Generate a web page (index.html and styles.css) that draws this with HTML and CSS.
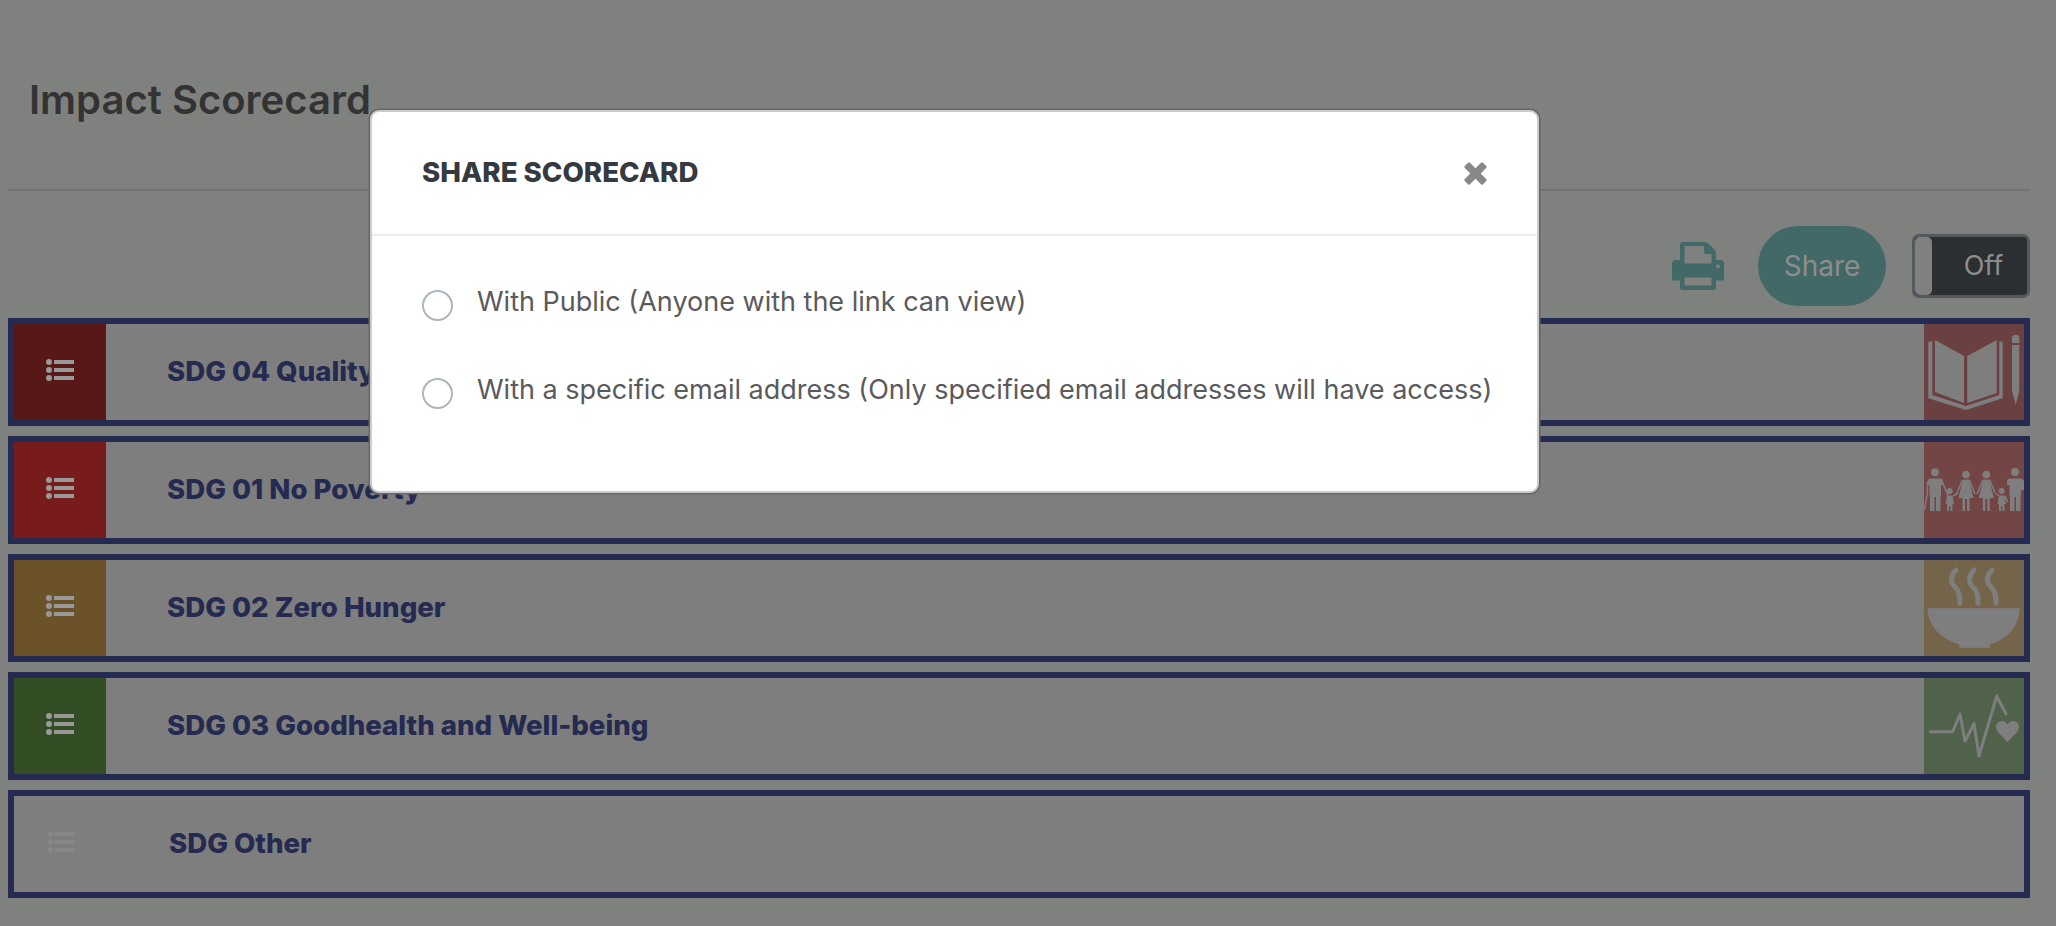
FILE: index.html
```html
<!DOCTYPE html>
<html lang="en">
<head>
  <meta charset="UTF-8">
  <meta name="viewport" content="width=device-width, initial-scale=1.0">
  <title>Impact Scorecard</title>
  <link rel="stylesheet" href="styles.css">
</head>
<body>

<div class="page">
  <h1 class="page-title">Impact Scorecard</h1>

  <!-- Acciones -->
  <div class="toolbar">
    <svg class="print-icon" viewBox="0 0 52 48">
      <path fill-rule="evenodd" d="M8 2.500Q8 0 10.500 0H33Q35 0 36.500 1.500L42.500 7.500Q44 9 44 11V18H48Q52 18 52 22V37Q52 38.500 50.500 38.500H44V45.500Q44 48 41.500 48H10.500Q8 48 8 45.500V38.500H1.500Q0 38.500 0 37V22Q0 18 4 18H8ZM12.500 4V21.500H39.500V12H34Q32 12 32 10V4ZM12.500 35.500V43.500H39.500V35.500ZM46 22.500A2 2 0 1 0 46 26.500A2 2 0 1 0 46 22.500Z"/>
    </svg>
    <button class="btn-share">Share</button>
    <div class="toggle">
      <span class="toggle-handle"></span>
      <span class="toggle-label">Off</span>
    </div>
  </div>

  <!-- Lista de SDG -->
  <div class="sdg-list">
    <div class="sdg-row">
      <div class="sdg-tile tile-dark-red">
        <svg class="list-icon" viewBox="0 0 28 22"><use href="#list-ul"/></svg>
      </div>
      <div class="sdg-name">SDG 04 Quality Education</div>
      <div class="sdg-goal goal-education">
        <svg viewBox="0 0 100 96">
          <path d="M11 16L40 32V79L11 68ZM43.300 32L72.700 16V69L43.300 79Z"/>
          <path d="M4.300 18L8.300 17V71L42 82L75.300 71V17L78.700 18V74.300L42 86L4.300 74.300Z"/>
          <path d="M88 19V14.500A3.650 3.650 0 0 1 95.300 14.500V19ZM88 21H95.300V67L91.700 81L88 67Z"/>
        </svg>
      </div>
    </div>

    <div class="sdg-row">
      <div class="sdg-tile tile-red">
        <svg class="list-icon" viewBox="0 0 28 22"><use href="#list-ul"/></svg>
      </div>
      <div class="sdg-name">SDG 01 No Poverty</div>
      <div class="sdg-goal goal-poverty">
        <svg viewBox="0 0 100 96">
          <g class="figures">
            <circle cx="11" cy="30.300" r="4"/>
            <path d="M6 36.500H16Q19 36.500 19 39.500V43H17V54H16.500V69H12V55H10.500V69H6V54H5.500V43H4V39.500Q4 36.500 6 36.500Z"/>
            <path class="arm" d="M18 39L24 54M3.500 39V50L0.500 68"/>
            <circle cx="25.700" cy="49" r="3"/>
            <path d="M23 53.500H28.500L30 62H28.500V69H26.300V64H25.200V69H23V62H21.500Z"/>
            <path class="arm" d="M29 54L34 51"/>
            <circle cx="42" cy="32.500" r="3.800"/>
            <path d="M39 37.500H45L49.500 56H45.500V69H43V57H41V69H38.500V56H34.500Z"/>
            <path class="arm" d="M38.500 38L33 51M45.500 38L51 52"/>
            <circle cx="62.300" cy="32.500" r="3.800"/>
            <path d="M59.300 37.500H65.300L69.800 56H65.800V69H63.300V57H61.300V69H58.800V56H54.800Z"/>
            <path class="arm" d="M58.800 38L53 52M65.800 38L71 51"/>
            <circle cx="77.700" cy="49" r="3"/>
            <path d="M75 53.500H80.500L82 62H80.500V69H78.300V64H77.200V69H75V62H73.500Z"/>
            <path class="arm" d="M75 54L71 51M80.500 54L84 60"/>
            <circle cx="91" cy="30" r="4"/>
            <path d="M86 36.500H96Q99 36.500 100 39.500V48H97V54H96.500V69H92V55H90.500V69H86V54H85.500V43H83V39.500Q83 36.500 86 36.500Z"/>
          </g>
        </svg>
      </div>
    </div>

    <div class="sdg-row">
      <div class="sdg-tile tile-amber">
        <svg class="list-icon" viewBox="0 0 28 22"><use href="#list-ul"/></svg>
      </div>
      <div class="sdg-name">SDG 02 Zero Hunger</div>
      <div class="sdg-goal goal-hunger">
        <svg viewBox="0 0 100 96">
          <path d="M3.300 48.300H96Q94 76 66 84.500V87.700H35.300V84.500Q6 76 3.300 48.300Z"/>
          <path class="steam" d="M32 10C26 16 26 22 31 27C35 31 36 35 36 43.300"/>
          <path class="steam" d="M50 10C44 16 44 22 49 27C53 31 54 35 54 43.300"/>
          <path class="steam" d="M68 10C62 16 62 22 67 27C71 31 72 35 72 43.300"/>
        </svg>
      </div>
    </div>

    <div class="sdg-row">
      <div class="sdg-tile tile-green">
        <svg class="list-icon" viewBox="0 0 28 22"><use href="#list-ul"/></svg>
      </div>
      <div class="sdg-name">SDG 03 Goodhealth and Well-being</div>
      <div class="sdg-goal goal-health">
        <svg viewBox="0 0 100 96">
          <path class="pulse" d="M6.500 53.700H28.700L36 36L41 63L50 45.700L55 78L72.700 18L82 36"/>
          <path d="M83.500 64L74 54Q71 50 72.500 46.500Q74 43 78 43Q81.500 43 83.500 46.500Q85.500 43 89 43Q93 43 94.500 46.500Q96 50 93 54Z"/>
        </svg>
      </div>
    </div>

    <div class="sdg-row">
      <div class="sdg-tile tile-none">
        <svg class="list-icon icon-faint" viewBox="0 0 28 22"><use href="#list-ul"/></svg>
      </div>
      <div class="sdg-name">SDG Other</div>
    </div>
  </div>
</div>

<!-- Modal compartir -->
<div class="modal">
  <div class="modal-header">
    <h2 class="modal-title">SHARE SCORECARD</h2>
    <svg class="modal-close" viewBox="0 0 23 23">
      <path d="M4 .8Q5 -.2 6 .8L11.500 6.300L17 .8Q18 -.2 19 .8L22.200 4Q23.200 5 22.200 6L16.700 11.500L22.200 17Q23.200 18 22.200 19L19 22.200Q18 23.200 17 22.200L11.500 16.700L6 22.200Q5 23.200 4 22.200L.8 19Q-.2 18 .8 17L6.300 11.500L.8 6Q-.2 5 .8 4Z"/>
    </svg>
  </div>
  <div class="modal-body">
    <label class="radio-row">
      <span class="radio"></span>
      <span class="radio-text">With Public (Anyone with the link can view)</span>
    </label>
    <label class="radio-row">
      <span class="radio"></span>
      <span class="radio-text">With a specific email address (Only specified email addresses will have access)</span>
    </label>
  </div>
</div>

<svg class="icon-defs">
  <symbol id="list-ul" viewBox="0 0 28 22">
    <circle cx="3" cy="3" r="3"/>
    <circle cx="3" cy="11" r="3"/>
    <circle cx="3" cy="19" r="3"/>
    <rect x="8" y="1" width="20" height="4"/>
    <rect x="8" y="9" width="20" height="4"/>
    <rect x="8" y="17" width="20" height="4"/>
  </symbol>
</svg>

</body>
</html>
```

FILE: styles.css
```css
* {
  margin: 0;
  padding: 0;
  box-sizing: border-box;
}

body {
  font-family: 'Inter', 'Liberation Sans', sans-serif;
  background: #7f817f;
  height: 926px;
  overflow: hidden;
  position: relative;
}

.page {
  padding: 0 26px 0 8px;
}

.page-title {
  height: 191px;
  padding: 76px 0 0 21px;
  font-family: 'Inter', sans-serif;
  font-size: 40px;
  line-height: 48px;
  font-weight: 600;
  color: #333;
  border-bottom: 2px solid #727472;
}

.toolbar {
  display: flex;
  justify-content: flex-end;
  align-items: center;
  gap: 26px;
  height: 127px;
  padding-top: 22px;
}

.print-icon {
  width: 52px;
  height: 48px;
  fill: #436868;
  margin-right: 8px;
}

.btn-share {
  width: 128px;
  height: 80px;
  background: #436868;
  color: #8c8e8d;
  border: none;
  border-radius: 40px;
  font-family: 'Inter', sans-serif;
  font-size: 28px;
}

.toggle {
  width: 118px;
  height: 64px;
  display: flex;
  align-items: center;
  background: #2b2f32;
  border: 3px solid #55595c;
  border-radius: 7px;
}

.toggle-handle {
  width: 17px;
  height: 58px;
  background: #808080;
  border-radius: 5px;
}

.toggle-label {
  flex: 1;
  text-align: center;
  padding-left: 8px;
  font-size: 27px;
  color: #8c8e8d;
}

.sdg-list {
  display: flex;
  flex-direction: column;
  gap: 10px;
}

.sdg-row {
  height: 108px;
  display: flex;
  align-items: center;
  background: #7e7e7f;
  border: 6px solid #252a50;
}

.sdg-tile {
  width: 92px;
  height: 96px;
  display: flex;
  align-items: center;
  justify-content: center;
  padding-bottom: 5px;
}

.tile-dark-red { background: #581818; }
.tile-red { background: #771b1d; }
.tile-amber { background: #6b5228; }
.tile-green { background: #334d24; }
.tile-none { width: 94px; }

.list-icon {
  width: 28px;
  height: 22px;
  fill: #999;
}

.icon-faint {
  fill: #878788;
}

.sdg-name {
  flex: 1;
  padding-left: 61px;
  margin-top: -2px;
  font-family: 'Inter', sans-serif;
  font-size: 27.600px;
  font-weight: 800;
  color: #252a50;
}

.sdg-goal {
  width: 100px;
  height: 96px;
}

.sdg-goal svg {
  display: block;
  width: 100px;
  height: 96px;
  fill: #7e7e7f;
}

.goal-education { background: #6b4040; }
.goal-poverty { background: #744545; }
.goal-hunger { background: #74654a; }
.goal-health { background: #50634a; }

.figures .arm {
  fill: none;
  stroke: #7e7e7f;
  stroke-width: 1.500;
}

.steam {
  fill: none;
  stroke: #7e7e7f;
  stroke-width: 5;
  stroke-linecap: round;
}

.sdg-goal svg .steam,
.sdg-goal svg .pulse {
  fill: none;
}

.pulse {
  stroke: #7e7e7f;
  stroke-width: 3;
  stroke-linecap: round;
  stroke-linejoin: round;
}

.modal {
  position: absolute;
  left: 370px;
  top: 110px;
  width: 1169px;
  height: 383px;
  background: white;
  border: 2px solid #cbcbcb;
  border-radius: 9px;
  box-shadow: 0 0 0 1.5px #666;
}

.modal-header {
  height: 124px;
  display: flex;
  align-items: center;
  justify-content: space-between;
  padding: 0 50px 0 50px;
  border-bottom: 2px solid #ececf1;
}

.modal-title {
  font-family: 'Inter', sans-serif;
  font-size: 27.700px;
  font-weight: 800;
  color: #343a40;
  margin-top: -3px;
}

.modal-close {
  width: 23px;
  height: 23px;
  fill: #888;
}

.modal-body {
  display: flex;
  flex-direction: column;
  gap: 57px;
  padding: 53px 50px 0;
}

.radio-row {
  display: flex;
  align-items: center;
  gap: 24px;
  height: 31px;
}

.radio {
  width: 31px;
  height: 31px;
  flex-shrink: 0;
  background: white;
  border: 2px solid #adb5bd;
  border-radius: 50%;
  margin-top: 1px;
}

.radio-text {
  font-size: 27px;
  color: #5a5a5c;
  margin-top: -6px;
  white-space: nowrap;
}

.icon-defs {
  display: none;
}
```
